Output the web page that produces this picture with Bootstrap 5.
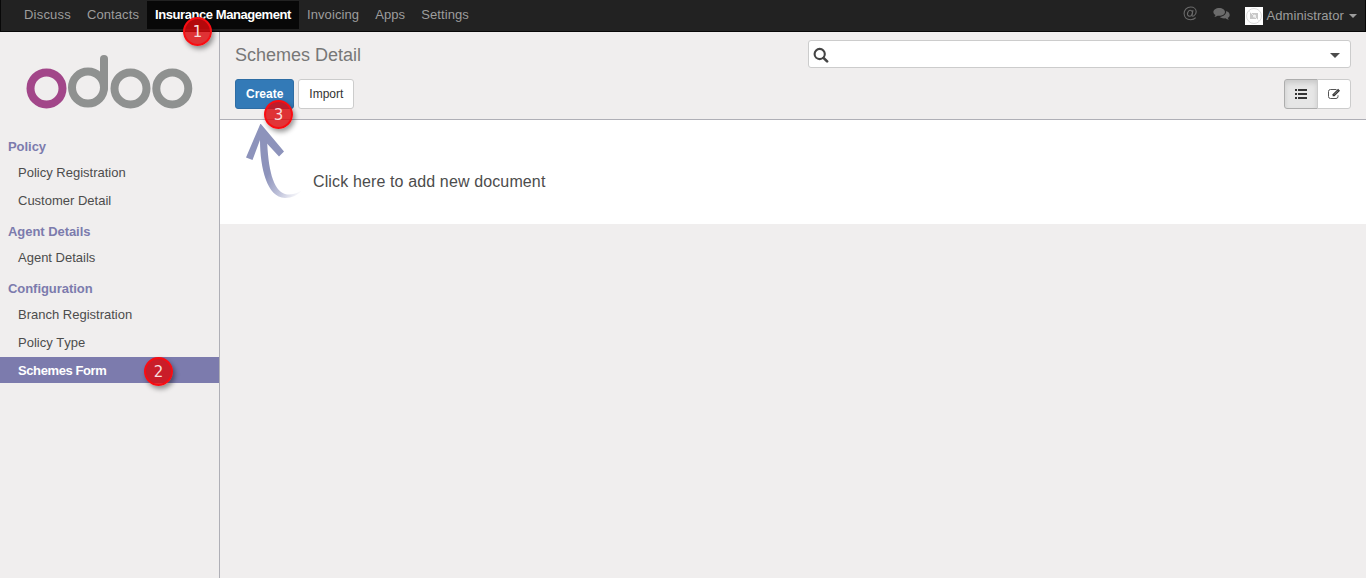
<!DOCTYPE html>
<html lang="en">
<head>
<meta charset="utf-8">
<meta name="viewport" content="width=device-width, initial-scale=1">
<title>Schemes Detail - Odoo</title>
<link href="https://cdn.jsdelivr.net/npm/bootstrap@5.3.0/dist/css/bootstrap.min.css" rel="stylesheet">
<style>
body{font:13px/18px "Liberation Sans",Arial,sans-serif;font-kerning:none;color:#4c4c4c;background:#f0eeee;height:100vh;overflow:hidden}
.topbar{height:32px;background:#222;border:1px solid #080808;border-top-width:0;padding:1px 0 0 15px}
.topbar .nav-link{height:28px;padding:4px 8px 0;color:#9d9d9d;line-height:20px;white-space:nowrap;letter-spacing:.1px}
.topbar .nav-link:first-child{letter-spacing:.2px}
.topbar .nav-link.active{background:#080808;color:#fff;font-weight:bold;letter-spacing:-.43px}
.systray{color:#9d9d9d}
.systray svg{display:block}
.avatar{width:18px;height:18px;background:#fff}
.arrow-down{width:0;height:0;border:4px solid transparent;border-top-color:currentColor;border-bottom:0}
.side{width:220px;border-right:1px solid #afafb6}
.side .logo-box{height:101px}
.side h2{font-size:13px;font-weight:bold;line-height:26px;height:26px;color:#7c7bad;margin:0;padding:1px 0 0 8px;letter-spacing:-.05px}
.side .menu{margin-bottom:3px}
.side .menu .nav-link{height:26px;line-height:26px;padding:1px 0 0 18px;margin-bottom:2px;color:#4c4c4c}
.side .menu .nav-link.active{background:#7c7bad;color:#fff;font-weight:bold;letter-spacing:-.4px}
.control{height:88px;border-bottom:1px solid #afafb6;padding:8px 15px 0}
.control h1{font-size:18px;line-height:30px;color:#777;margin:0}
.search{width:543px;height:28px;background:#fff;border:1px solid #ccc;border-radius:3px;padding:0 10px 0 4px}
.control .btn{font-size:12px;line-height:18px;height:30px;padding:5px 10px;border-radius:3px}
.control .btn-create{background:#337ab7;border-color:#2e6da4;color:#fff;font-weight:bold}
.btn-plain{background:#fff;border-color:#ccc;color:#333}
.control .views .btn{width:34px;padding:0;display:flex;align-items:center;justify-content:center;color:#333}
.control .views .btn:first-child{border-radius:3px 0 0 3px}
.control .views .btn:last-child{border-radius:0 3px 3px 0}
.views .btn.on{background:#e6e6e6;border-color:#adadad;box-shadow:inset 0 3px 5px rgba(0,0,0,.125)}
.empty{height:104px;padding:4px 0 0 26px}
.empty p{font-size:16px;margin:49px 0 0 11px;letter-spacing:.13px}
.step{position:absolute;width:29px;height:29px;border-radius:50%;border:2px solid #f80d12;background:rgba(218,8,12,.82);color:#f7dede;font:15px/26px "DejaVu Sans",sans-serif;letter-spacing:0;text-align:center;box-shadow:2px 3px 5px rgba(0,0,0,.4);z-index:5}
.step-1{left:36px;top:16px}
.step-2{left:144px;top:0}
.step-3{left:28px;top:20px}
</style>
</head>
<body class="d-flex flex-column">
<header class="topbar d-flex flex-shrink-0">
  <nav class="nav flex-nowrap">
    <a class="nav-link" href="#">Discuss</a>
    <a class="nav-link" href="#">Contacts</a>
    <a class="nav-link active position-relative" href="#">Insurance Management<span class="step step-1 fw-normal">1</span></a>
    <a class="nav-link" href="#">Invoicing</a>
    <a class="nav-link" href="#">Apps</a>
    <a class="nav-link" href="#">Settings</a>
  </nav>
  <div class="systray d-flex align-items-center ms-auto pe-2">
    <svg width="15" height="15" viewBox="0 0 15 15" fill="none" stroke="#6b6b6b" stroke-width="1.1" style="margin:-5px 15px 0 0"><ellipse cx="7" cy="7.3" rx="2.4" ry="3" transform="rotate(20 7 7.3)"/><path d="M10 4.2 9 9c-.2 1.2.7 1.5 1.7.9 1.500-.8 2.500-2.300 2.500-4.100C13.200 3 10.700 1 7.700 1 3.900 1 1.100 3.900 1.100 7.600s2.700 6.100 6.500 6.100c2.200 0 4-.8 5.100-2"/></svg>
    <svg width="17" height="15" viewBox="0 0 17 15" fill="#6b6b6b" style="margin:-3px 15px 0 0"><path d="M6.200 1C2.900 1 .4 2.700.4 5c0 1.300.8 2.400 2.100 3.100-.2.800-.7 1.300-1.200 1.900 1.200-.1 2.400-.6 3.300-1.300l1.600.1C9.500 8.800 12 7.200 12 5S9.500 1 6.200 1z"/><path d="M13.200 4.100c.2 3.300-2.700 5.600-6.500 5.900 1 .9 2.600 1.400 4.400 1.400l1.300-.1c1 .9 2.200 1.400 3.500 1.500-.6-.6-1-1.100-1.200-2 1.200-.6 2-1.600 2-2.900 0-1.600-1.300-3-3.500-3.800z"/></svg>
    <span class="avatar"><svg width="18" height="18" viewBox="0 0 18 18"><circle cx="9" cy="9" r="7.500" fill="none" stroke="#ddd"/><path d="M5 6h8v6H5z" fill="#c8c8c8"/><circle cx="9.500" cy="9" r="1.500" fill="#f5f5f5"/><path d="m4 4 10 10" stroke="#eee"/></svg></span>
    <span class="ms-1" style="letter-spacing:.07px">Administrator</span>
    <span class="arrow-down" style="margin-left:5px"></span>
  </div>
</header>
<div class="d-flex flex-grow-1">
  <aside class="side flex-shrink-0">
    <div class="logo-box">
      <svg class="d-block" width="219" height="101" viewBox="0 32 219 101" fill="none" stroke="#8f9190" stroke-width="8"><circle cx="46.500" cy="88.400" r="16" stroke="#a24689"/><circle cx="88" cy="87.600" r="16"/><path d="M104 88V59" stroke-linecap="round"/><circle cx="130.500" cy="88.400" r="16"/><circle cx="172.300" cy="88.400" r="16"/></svg>
    </div>
    <h2>Policy</h2>
    <nav class="menu nav flex-column"><a class="nav-link" href="#">Policy Registration</a><a class="nav-link" href="#">Customer Detail</a></nav>
    <h2>Agent Details</h2>
    <nav class="menu nav flex-column"><a class="nav-link" href="#">Agent Details</a></nav>
    <h2>Configuration</h2>
    <nav class="menu nav flex-column"><a class="nav-link" href="#">Branch Registration</a><a class="nav-link" href="#">Policy Type</a><a class="nav-link active position-relative" href="#">Schemes Form<span class="step step-2 fw-normal">2</span></a></nav>
  </aside>
  <main class="flex-grow-1">
    <div class="control">
      <div class="d-flex justify-content-between">
        <h1 class="fw-normal">Schemes Detail</h1>
        <div class="search d-flex align-items-center justify-content-between">
          <svg width="16" height="16" viewBox="0 0 16 16" fill="none" stroke="#444" stroke-width="2.100" style="margin-top:2px"><circle cx="6.700" cy="7" r="5.100"/><path d="m10.500 10.800 3.600 3.600" stroke-linecap="round" stroke-width="2.600"/></svg>
          <span class="arrow-down" style="border-width:5px 5px 0;margin-top:2px"></span>
        </div>
      </div>
      <div class="d-flex justify-content-between" style="margin-top:9px">
        <div class="d-flex gap-1">
          <button class="btn btn-create position-relative">Create<span class="step step-3 fw-normal">3</span></button>
          <button class="btn btn-plain">Import</button>
        </div>
        <div class="btn-group views">
          <button class="btn btn-plain on" aria-label="List"><svg width="12" height="10" viewBox="0 0 12 10" fill="#333"><path d="M0 0h2v2H0zM3 0h9v2H3zM0 4h2v2H0zM3 4h9v2H3zM0 8h2v2H0zM3 8h9v2H3z"/></svg></button>
          <button class="btn btn-plain" aria-label="Form"><svg width="13" height="12" viewBox="0 0 13 12"><path d="M8.500 1.500H2.500Q.5 1.500.5 3.500v5q0 2 2 2h5.500q2 0 2-2V7.300" fill="none" stroke="#555"/><path d="m4.600 6.300 5.500-5.500 1.900 1.900-5.500 5.500H4.600z" fill="#333"/><path d="m6 6.700 4-4" stroke="#ddd" stroke-width=".5"/></svg></button>
        </div>
      </div>
    </div>
    <div class="empty bg-white d-flex">
      <svg width="56" height="78" viewBox="246 124 56 78"><defs><linearGradient id="tail" gradientUnits="userSpaceOnUse" x1="268" y1="174" x2="301" y2="194"><stop offset="0" stop-color="#8d93bb"/><stop offset=".5" stop-color="#bfc2da"/><stop offset="1" stop-color="#fff"/></linearGradient></defs><path d="M260 140C260 168 267 197.500 285 198 292 198 298 195 302 190.500 296 194 290 195.500 285 194 273 190 268 169 267 138z" fill="url(#tail)"/><path d="M260.500 123.500 284 151.500 279 156.500 266.500 143 266 140H260L252.500 160 246 157.500z" fill="#8d93bb"/></svg>
      <p>Click here to add new document</p>
    </div>
  </main>
</div>
<script src="https://cdn.jsdelivr.net/npm/bootstrap@5.3.0/dist/js/bootstrap.bundle.min.js"></script>
</body>
</html>
